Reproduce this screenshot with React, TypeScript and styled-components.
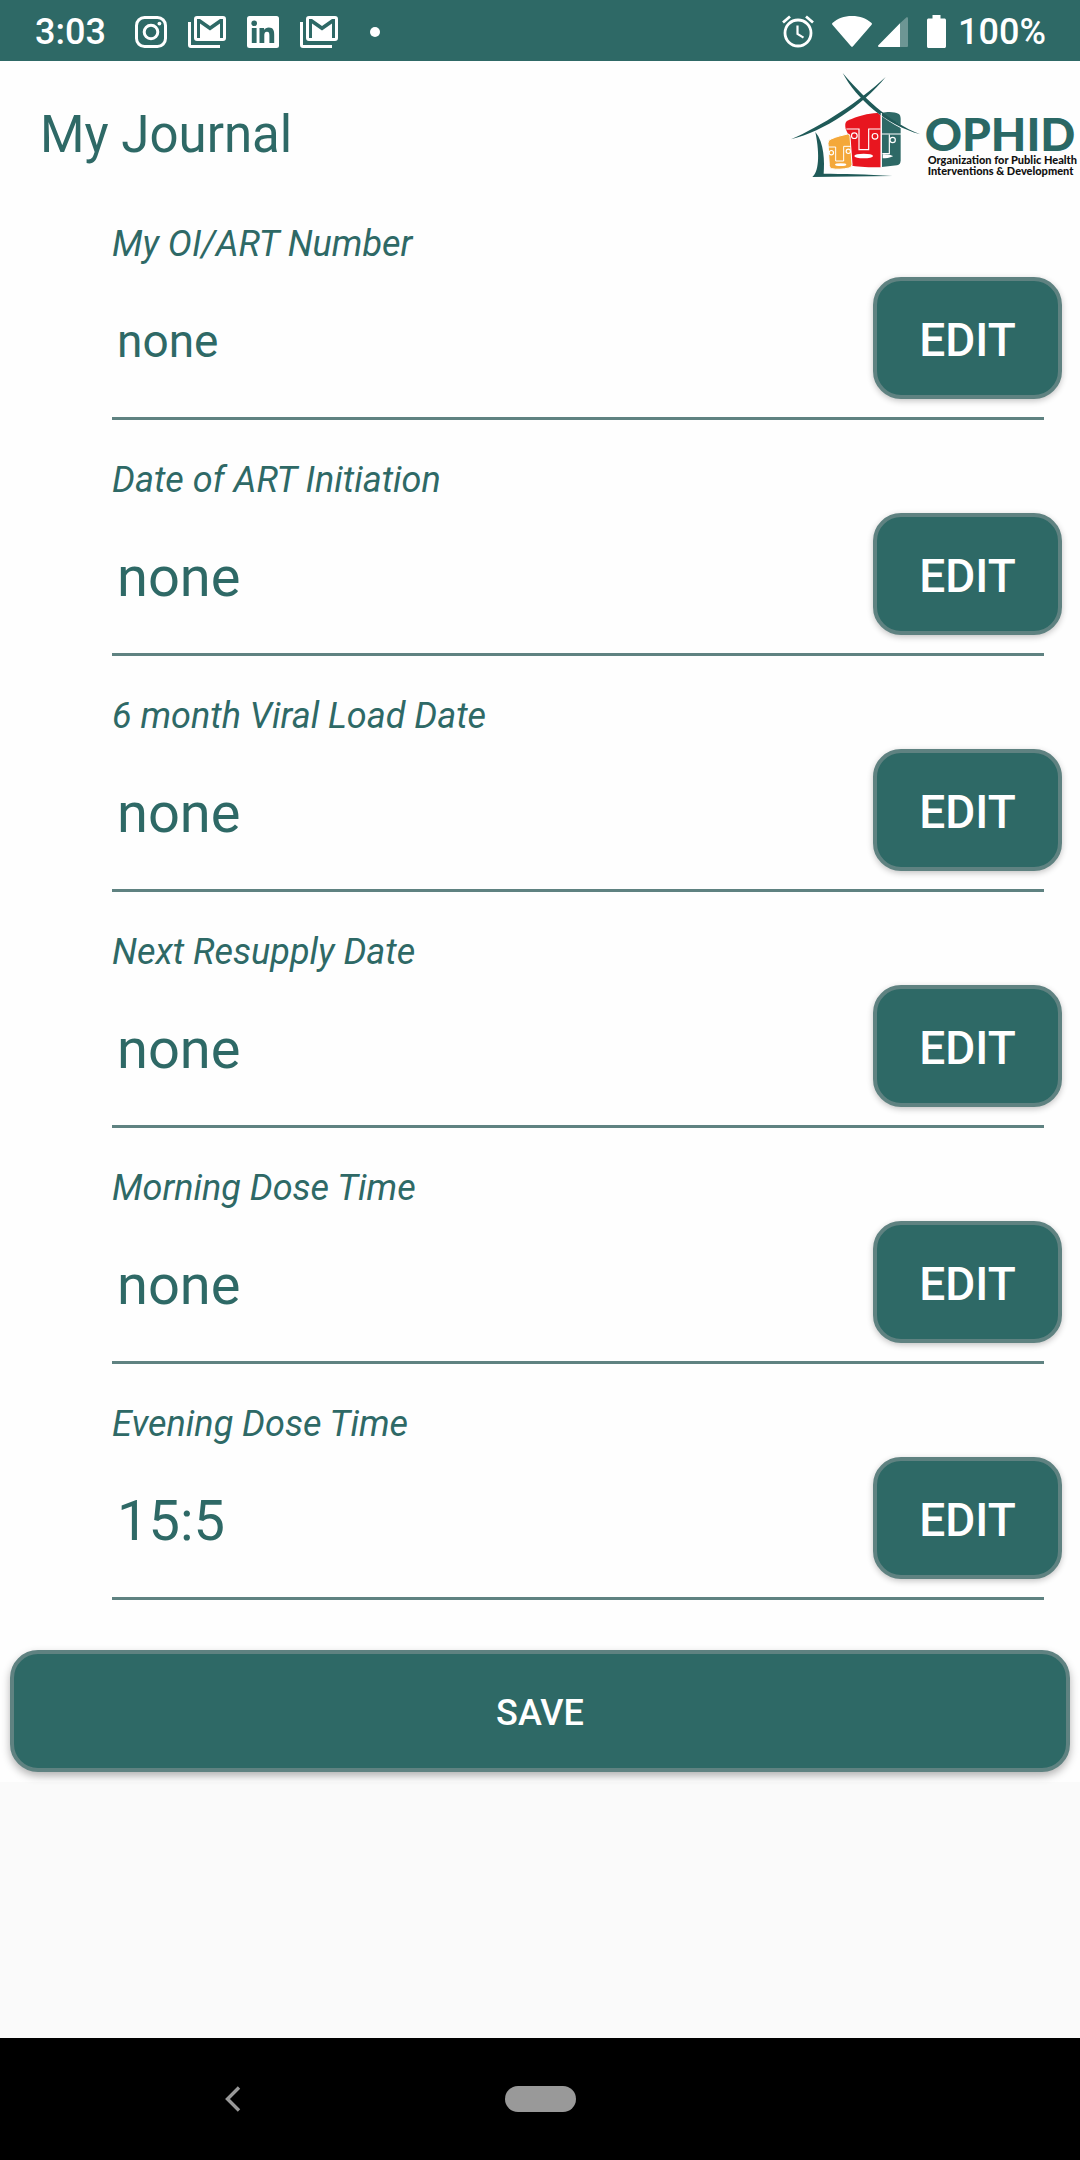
import React, { useState } from "react";
import styled, { createGlobalStyle } from "styled-components";

const TEAL = "#2e6966";
const EDGE = "#5f8281";

const GlobalStyle = createGlobalStyle`
  *, *::before, *::after { box-sizing: border-box; }
  body { margin: 0; background: #fafafa; font-family: Roboto, "Liberation Sans", sans-serif; }
  button, input { font-family: inherit; }
`;

const Screen = styled.div`
  display: flex;
  flex-direction: column;
  min-height: 100vh;
`;

const StatusBar = styled.div`
  display: flex;
  align-items: center;
  justify-content: space-between;
  height: 61px;
  padding: 2px 34px 0 35px;
  background: ${TEAL};
  color: #fff;
  font-size: 36px;
  font-weight: 500;
  line-height: 42px;
`;

const StatusGroup = styled.div`
  display: flex;
  align-items: center;
`;

const Notifications = styled.div`
  display: flex;
  align-items: center;
  gap: 21px;
  margin-left: 29px;
`;

const Dot = styled.span`
  width: 10px;
  height: 10px;
  margin-left: 11px;
  border-radius: 50%;
  background: #fff;
`;

const Indicators = styled.div`
  display: flex;
  align-items: center;
  margin-right: 12px;
`;

const Gap = styled.span<{ $size: number }>`
  width: ${(p) => p.$size}px;
`;

const Sheet = styled.main`
  padding-bottom: 10px;
  background: #fefefe;
`;

const Header = styled.header`
  display: flex;
  justify-content: space-between;
  align-items: flex-start;
  height: 144px;
  padding-left: 40px;
`;

const Title = styled.h1`
  margin: 44px 0 0;
  color: ${TEAL};
  font-size: 51px;
  font-weight: 400;
  line-height: 60px;
`;

const Logo = styled.div`
  display: flex;
  padding: 8px 3px 0 0;
`;

const LogoWords = styled.div`
  margin: 45px 0 0 -4px;
  color: #111;
  font-family: Lato, "Liberation Sans", sans-serif;
  font-size: 11px;
  font-weight: 900;
  line-height: 11px;
  white-space: nowrap;
`;

const LogoName = styled.div`
  color: #2a6865;
  font-size: 46px;
  line-height: 40px;
`;

const LogoLine = styled.div`
  padding-left: 3px;
`;

const Entry = styled.div`
  height: 236px;
  padding: 18px 18px 0 112px;
`;

const EntryLabel = styled.label`
  display: block;
  color: ${TEAL};
  font-size: 36px;
  font-style: italic;
  line-height: 42px;
`;

const EntryRow = styled.div`
  display: flex;
  align-items: center;
  margin-top: 12px;
`;

const EntryInput = styled.input<{ $size: number }>`
  flex: 1;
  min-width: 0;
  height: 122px;
  padding: 5px 5px 0;
  border: 0;
  outline: 0;
  background: transparent;
  color: ${TEAL};
  font-size: ${(p) => p.$size}px;
`;

const Rule = styled.hr`
  height: 3px;
  margin: 18px 18px 0 0;
  border: 0;
  background: ${EDGE};
`;

const ActionButton = styled.button`
  height: 122px;
  padding: 4px 0 0;
  border: 4px solid ${EDGE};
  border-radius: 28px;
  background: ${TEAL};
  color: #fff;
  font-weight: 500;
  cursor: pointer;
`;

const EditButton = styled(ActionButton)`
  width: 189px;
  font-size: 46px;
  box-shadow: 0 2px 6px rgba(0, 0, 0, 0.24);
`;

const SaveButton = styled(ActionButton)`
  display: block;
  width: calc(100% - 20px);
  margin: 29px 10px 0;
  font-size: 36px;
  box-shadow: 0 4px 8px rgba(0, 0, 0, 0.3);
`;

const NavBar = styled.nav`
  display: grid;
  grid-template-columns: 1fr auto 1fr;
  align-items: center;
  height: 122px;
  margin-top: auto;
  background: #000;
`;

const BackButton = styled.button`
  display: flex;
  justify-self: center;
  margin-right: 38px;
  padding: 0;
  border: 0;
  background: none;
`;

const HomeButton = styled.button`
  width: 71px;
  height: 26px;
  padding: 0;
  border: 0;
  border-radius: 13px;
  background: #999;
`;

const InstagramIcon = () => (
  <svg width="32" height="32" viewBox="0 0 32 32" fill="none" stroke="#fff" strokeWidth="3">
    <rect x="1.5" y="1.5" width="29" height="29" rx="8" />
    <circle cx="16" cy="16" r="6.8" />
    <circle cx="24.4" cy="7.6" r="1.9" fill="#fff" stroke="none" />
  </svg>
);

const GmailIcon = () => (
  <svg width="38" height="32" viewBox="0 0 38 32" fill="#fff">
    <path d="M0 6h3v23h29v3H3a3 3 0 0 1-3-3z" />
    <path
      fillRule="evenodd"
      d="M9 0h26a3 3 0 0 1 3 3v19a3 3 0 0 1-3 3H9a3 3 0 0 1-3-3V3a3 3 0 0 1 3-3zM9 3v19h3V7.500l10 7 10-7V22h3V3h-3l-10 7-10-7z"
    />
  </svg>
);

const LinkedInIcon = () => (
  <svg width="32" height="32" viewBox="0 0 32 32">
    <rect width="32" height="32" rx="2.500" fill="#fff" />
    <g fill={TEAL}>
      <circle cx="7.200" cy="7.200" r="2.800" />
      <path d="M4.800 12h4.800v15H4.800zM12.500 12h4.600v2.100c.8-1.400 2.500-2.500 4.700-2.500 4.300 0 5.400 2.800 5.400 6.800V27h-4.800v-7.600c0-2-.3-3.700-2.400-3.700-2.200 0-2.700 1.700-2.700 3.700V27h-4.800z" />
    </g>
  </svg>
);

const AlarmIcon = () => (
  <svg width="32" height="33" viewBox="0 0 32 33" fill="none" stroke="#fff" strokeWidth="2.800">
    <circle cx="16" cy="18" r="13" />
    <path d="M1 7.500 8 1.500M31 7.500 24 1.500" />
    <path d="M15.500 10.500v8.500l6 3.600" strokeWidth="2.200" />
  </svg>
);

const WifiIcon = () => (
  <svg width="40" height="31" viewBox="0 0 40 31">
    <path d="M0.400 7C5.500 2.600 12 0 20 0s14.500 2.600 19.600 7c.5.500.4 1.200 0 1.700L21 30.300c-.6.700-1.400.7-2 0L.4 8.700C0 8.200-.1 7.500.4 7z" fill="#fff" />
  </svg>
);

const SignalIcon = () => (
  <svg width="30" height="30" viewBox="0 0 30 30" fill="#fff">
    <path d="M22 6.200V30H1.200C0 30-.4 29 .4 28.200z" />
    <path d="M22 6.200 28.300.400C29 0 30 .2 30 1.200V29a1 1 0 0 1-1 1h-7z" opacity=".3" />
  </svg>
);

const BatteryIcon = () => (
  <svg width="19" height="33" viewBox="0 0 19 33" fill="#fff">
    <path d="M5.500 0h8v3.500h3.800c1 0 1.700.7 1.700 1.700v26c0 1-.7 1.800-1.700 1.800H1.700C.7 33 0 32.200 0 31.200v-26c0-1 .7-1.700 1.700-1.700h3.800z" />
  </svg>
);

const BackIcon = () => (
  <svg width="16" height="26" viewBox="0 0 16 26" fill="none" stroke="#999" strokeWidth="3.400">
    <path d="M14 1.500 2.500 13 14 24.500" />
  </svg>
);

/* A house roof over three stylised masks. */
const HouseMark = () => (
  <svg width="138" height="114" viewBox="0 0 414 342">
    <path d="M272 132C295 126 312 130 322 134Q329 137 329 150V274Q329 287 318 289L272 294z" fill="#2e6966" />
    <path d="M164 180C160 158 166 156 180 151C215 136 240 132 269 132V295C235 295 205 294 184 290C178 240 180 210 164 180z" fill="#e8161f" />
    <path d="M111 223Q110 214 120 210C140 201 155 199 170 195Q176 194 177 202L183 286Q183 295 174 297C155 301 138 302 122 299Q116 298 115 290z" fill="#f4a83a" stroke="#fff" strokeWidth="3" />
    <path d="M322 168C345 178 365 188 388 196" fill="none" stroke="#fff" strokeWidth="6" />
    <path d="M262 128C285 148 305 160 332 174" fill="none" stroke="#fff" strokeWidth="8" />
    <g fill="#1f5a58">
      <path d="M0 211C90 172 205 98 284 24C212 112 100 186 0 211z" />
      <path d="M155 12C212 78 290 158 388 196C286 168 196 90 155 12z" />
      <path d="M73 189C100 220 101 280 98 314C150 315 230 315 304 321L64 324C82 310 88 262 73 189z" />
    </g>
    <g fill="none" stroke="#fff" strokeWidth="3.500">
      <path d="M166 180H204V242H233V180H268M271 132V295M272 195H330M274 254H295V197" />
      <path d="M112 234H134V276H158V232H180" strokeWidth="3" />
      <circle cx="190" cy="200" r="8.500" />
      <circle cx="252" cy="202" r="8.500" />
      <circle cx="305" cy="213" r="8" />
      <circle cx="121" cy="251" r="6.500" />
      <circle cx="172" cy="247" r="6.500" />
    </g>
    <g fill="#fff">
      <ellipse cx="218" cy="261" rx="28" ry="7" />
      <path d="M275 256C290 256 302 258 306 262C296 267 284 268 275 268z" />
      <ellipse cx="149" cy="287" rx="17" ry="4" />
    </g>
  </svg>
);

const FIELDS = [
  { id: "art-number", label: "My OI/ART Number", value: "none", size: 46 },
  { id: "art-date", label: "Date of ART Initiation", value: "none", size: 56 },
  { id: "viral-load", label: "6 month Viral Load Date", value: "none", size: 56 },
  { id: "resupply", label: "Next Resupply Date", value: "none", size: 56 },
  { id: "morning", label: "Morning Dose Time", value: "none", size: 56 },
  { id: "evening", label: "Evening Dose Time", value: "15:5", size: 56 },
];

type FieldProps = { id: string; label: string; value: string; size: number };

function JournalEntry({ id, label, value, size }: FieldProps) {
  const [text, setText] = useState(value);
  return (
    <Entry>
      <EntryLabel htmlFor={id}>{label}</EntryLabel>
      <EntryRow>
        <EntryInput id={id} $size={size} value={text} onChange={(e) => setText(e.target.value)} />
        <EditButton type="button">EDIT</EditButton>
      </EntryRow>
      <Rule />
    </Entry>
  );
}

export default function App() {
  return (
    <Screen>
      <GlobalStyle />
      <StatusBar>
        <StatusGroup>
          <span>3:03</span>
          <Notifications>
            <InstagramIcon />
            <GmailIcon />
            <LinkedInIcon />
            <GmailIcon />
            <Dot />
          </Notifications>
        </StatusGroup>
        <StatusGroup>
          <Indicators>
            <AlarmIcon />
            <Gap $size={18} />
            <WifiIcon />
            <Gap $size={6} />
            <SignalIcon />
            <Gap $size={19} />
            <BatteryIcon />
          </Indicators>
          <span>100%</span>
        </StatusGroup>
      </StatusBar>
      <Sheet>
        <Header>
          <Title>My Journal</Title>
          <Logo>
            <HouseMark />
            <LogoWords>
              <LogoName>OPHID</LogoName>
              <LogoLine>Organization for Public Health</LogoLine>
              <LogoLine>Interventions &amp; Development</LogoLine>
            </LogoWords>
          </Logo>
        </Header>
        {FIELDS.map((field) => (
          <JournalEntry key={field.id} {...field} />
        ))}
        <SaveButton type="button">SAVE</SaveButton>
      </Sheet>
      <NavBar>
        <BackButton type="button" aria-label="Back">
          <BackIcon />
        </BackButton>
        <HomeButton type="button" aria-label="Home" />
      </NavBar>
    </Screen>
  );
}
